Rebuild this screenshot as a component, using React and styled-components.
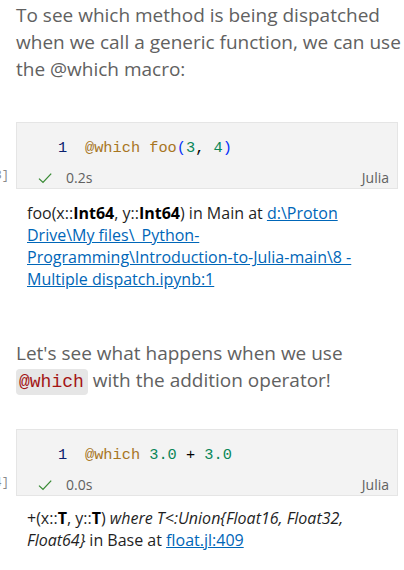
import React from "react";
import styled, { createGlobalStyle } from "styled-components";

const Global = createGlobalStyle`
  html, body { margin: 0; padding: 0; background: #ffffff; }
  body { font-family: "Open Sans", "Noto Sans", sans-serif; overflow: hidden; }
`;

const Page = styled.div`
  width: 404px;
  height: 570px;
  overflow: hidden;
  display: flex;
  flex-direction: column;
  padding-top: 2px;
  box-sizing: border-box;
`;

const Markdown = styled.p`
  margin: 0;
  padding: 0 0 0 16px;
  font-size: 19px;
  line-height: 27px;
  color: #616161;
  margin-top: ${(p) => p.$top || 0}px;
`;

const InlineCode = styled.code`
  font-family: "Liberation Mono", "DejaVu Sans Mono", monospace;
  font-size: 18px;
  line-height: 20px;
  color: #a31515;
  background: #e6e6e6;
  border-radius: 4px;
  padding: 3px 4px 3px 3px;
`;

const CellRow = styled.div`
  display: flex;
  margin-top: ${(p) => p.$top || 0}px;
`;

const Gutter = styled.div`
  width: 16px;
  flex: none;
  overflow: hidden;
  display: flex;
  justify-content: flex-end;
  align-items: flex-end;
  padding-bottom: 3px;
  box-sizing: border-box;
`;

const Counter = styled.span`
  font-family: "Liberation Mono", monospace;
  font-size: 12px;
  line-height: 20px;
  color: #8a8a8a;
  margin-right: 7px;
  white-space: nowrap;
`;

const CodeBox = styled.div`
  width: 382px;
  box-sizing: border-box;
  background: #f3f3f3;
  border: 1px solid #e5e5e5;
  display: flex;
  flex-direction: column;
`;

const CodeLine = styled.div`
  display: flex;
  align-items: baseline;
  box-sizing: border-box;
  height: 36px;
  padding: 14px 0 0 41px;
  line-height: 22px;
  font-family: "Liberation Mono", monospace;
  font-size: 15.3px;
  white-space: pre;
`;

const LineNo = styled.span`
  color: #0b216f;
  width: 27px;
`;

const Tok = styled.span`
  color: ${(p) => p.$c};
`;

const Status = styled.div`
  display: flex;
  align-items: center;
  box-sizing: border-box;
  height: 29px;
  padding: 8px 8px 0 20px;
  font-size: 14px;
  color: #616161;
`;

const Check = styled.svg`
  width: 16px;
  height: 16px;
  margin-right: 13px;
`;

const Lang = styled.span`
  margin-left: auto;
`;

const Output = styled.div`
  padding: 0 14px 0 27px;
  font-size: 16px;
  line-height: 22px;
  color: #1f1f1f;
  margin-top: ${(p) => p.$top || 0}px;
  b { font-weight: 700; color: #000; }
  i { font-style: italic; }
`;

const Link = styled.a`
  color: #0066b8;
  text-decoration: underline;
`;

const colors = {
  mac: "#a8761f",
  num: "#098658",
  par: "#0431fa",
  op: "#000000",
};

function CodeCell({ top, counter, time, children }) {
  return (
    <CellRow $top={top}>
      <Gutter>
        <Counter>{counter}</Counter>
      </Gutter>
      <CodeBox>
        <CodeLine>
          <LineNo>1</LineNo>
          {children}
        </CodeLine>
        <Status>
          <Check viewBox="0 0 16 16">
            <path d="M2 8.6 L6 12.4 L14.2 3.6" fill="none" stroke="#388a34" strokeWidth="1.3" />
          </Check>
          <span>{time}</span>
          <Lang>Julia</Lang>
        </Status>
      </CodeBox>
    </CellRow>
  );
}

export default function App() {
  return (
    <Page>
      <Global />
      <Markdown>
        To see which method is being dispatched when we call a generic function, we can use the @which macro:
      </Markdown>
      <CodeCell top={39} counter="[3]" time="0.2s">
        <Tok $c={colors.mac}>@which foo</Tok>
        <Tok $c={colors.par}>(</Tok>
        <Tok $c={colors.num}>3</Tok>
        <Tok $c={colors.op}>, </Tok>
        <Tok $c={colors.num}>4</Tok>
        <Tok $c={colors.par}>)</Tok>
      </CodeCell>
      <Output $top={13}>
        foo(x::<b>Int64</b>, y::<b>Int64</b>) in Main at{" "}
        <Link href="#">d:\Proton Drive\My files\_Python-Programming\Introduction-to-Julia-main\8 - Multiple dispatch.ipynb:1</Link>
      </Output>
      <Markdown $top={50}>
        Let's see what happens when we use <InlineCode>@which</InlineCode> with the addition operator!
      </Markdown>
      <CodeCell top={35} counter="[4]" time="0.0s">
        <Tok $c={colors.mac}>@which </Tok>
        <Tok $c={colors.num}>3.0</Tok>
        <Tok $c={colors.op}> + </Tok>
        <Tok $c={colors.num}>3.0</Tok>
      </CodeCell>
      <Output $top={11}>
        +(x::<b>T</b>, y::<b>T</b>) <i>where T&lt;:Union{"{"}Float16, Float32, Float64{"}"}</i> in Base at{" "}
        <Link href="#">float.jl:409</Link>
      </Output>
    </Page>
  );
}
